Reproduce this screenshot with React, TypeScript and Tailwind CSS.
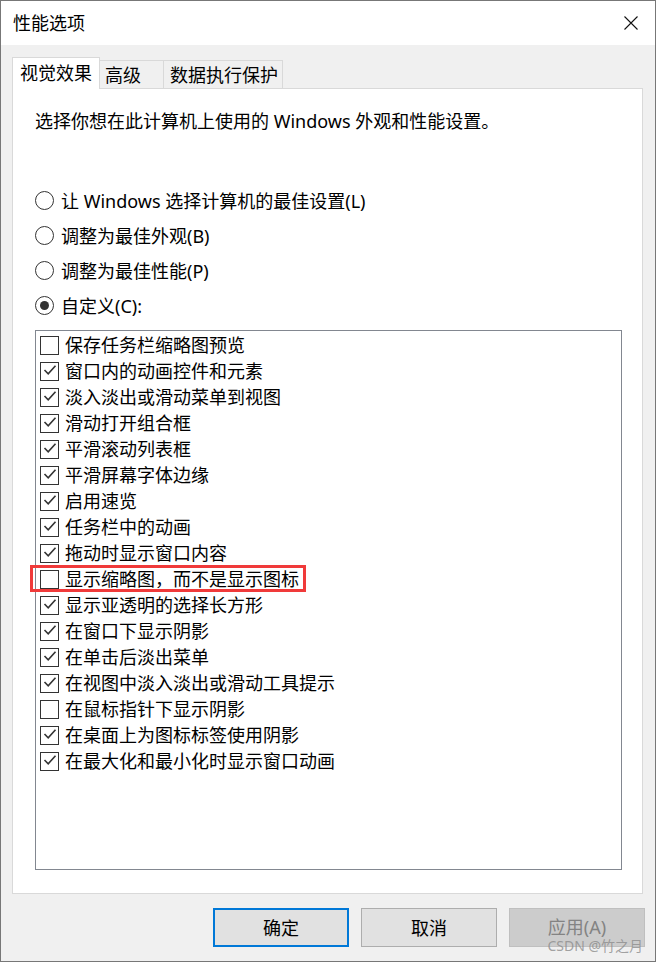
import { useState } from "react";

const options = [
  { key: "auto", label: "让 Windows 选择计算机的最佳设置(L)" },
  { key: "look", label: "调整为最佳外观(B)" },
  { key: "perf", label: "调整为最佳性能(P)" },
  { key: "custom", label: "自定义(C):" },
];

const effects = [
  { label: "保存任务栏缩略图预览", on: false },
  { label: "窗口内的动画控件和元素", on: true },
  { label: "淡入淡出或滑动菜单到视图", on: true },
  { label: "滑动打开组合框", on: true },
  { label: "平滑滚动列表框", on: true },
  { label: "平滑屏幕字体边缘", on: true },
  { label: "启用速览", on: true },
  { label: "任务栏中的动画", on: true },
  { label: "拖动时显示窗口内容", on: true },
  { label: "显示缩略图，而不是显示图标", on: false, marked: true },
  { label: "显示亚透明的选择长方形", on: true },
  { label: "在窗口下显示阴影", on: true },
  { label: "在单击后淡出菜单", on: true },
  { label: "在视图中淡入淡出或滑动工具提示", on: true },
  { label: "在鼠标指针下显示阴影", on: false },
  { label: "在桌面上为图标标签使用阴影", on: true },
  { label: "在最大化和最小化时显示窗口动画", on: true },
];

const Checkbox = ({ checked }: { checked: boolean }) => (
  <span className="w-[19px] h-[19px] shrink-0 border border-[#333] bg-white flex items-center justify-center">
    {checked && (
      <svg width="17" height="17" viewBox="0 0 17 17">
        <polyline points="3.5,7 7.2,10.8 14.5,2.8" fill="none" stroke="#333" strokeWidth="1.6" />
      </svg>
    )}
  </span>
);

const Radio = ({ selected }: { selected: boolean }) => (
  <span className="w-[19px] h-[19px] shrink-0 rounded-full border border-[#333] bg-white flex items-center justify-center">
    {selected && <span className="w-[9px] h-[9px] rounded-full bg-[#333]" />}
  </span>
);

export default function App() {
  const [choice, setChoice] = useState("custom");
  const [items, setItems] = useState(effects);

  const toggle = (i: number) =>
    setItems((prev) => prev.map((it, idx) => (idx === i ? { ...it, on: !it.on } : it)));

  return (
    <div className="relative w-[656px] h-[962px] border border-[#777] bg-[#f0f0f0] flex flex-col text-[18px] text-black font-['Noto_Sans','Noto_Sans_CJK_SC',sans-serif]">
      {/* title bar */}
      <div className="h-[44px] shrink-0 bg-white flex items-center justify-between pl-[12px] pr-[17px]">
        <span className="leading-[24px]">性能选项</span>
        <svg width="14" height="14" viewBox="0 0 14 14">
          <path d="M0.5 0.5 L13.5 13.5 M13.5 0.5 L0.5 13.5" stroke="#111" strokeWidth="1.1" />
        </svg>
      </div>

      <div className="flex-1 flex flex-col pl-[11px] pr-[12px] pt-[12px]">
        {/* tabs */}
        <div className="h-[31px] flex items-end">
          <div className="relative z-10 w-[88px] h-[32px] -mb-px bg-white border border-b-0 border-[#d9d9d9] flex items-center pl-[7px] leading-[24px] pb-[2px]">
            视觉效果
          </div>
          <div className="w-[65px] h-[28px] -ml-px border border-b-0 border-[#d9d9d9] flex items-center pl-[5px] leading-[24px]">
            高级
          </div>
          <div className="w-[120px] h-[28px] -ml-px border border-b-0 border-[#d9d9d9] flex items-center pl-[6px] leading-[24px]">
            数据执行保护
          </div>
        </div>

        {/* panel */}
        <div className="w-[631px] h-[806px] bg-white border border-[#d9d9d9] pl-[22px] pt-[20px]">
          <p className="leading-[24px]">选择你想在此计算机上使用的 Windows 外观和性能设置。</p>

          <div className="mt-[50px] flex flex-col">
            {options.map((o) => (
              <div
                key={o.key}
                onClick={() => setChoice(o.key)}
                className="h-[35px] flex items-center gap-[7px] cursor-default"
              >
                <Radio selected={choice === o.key} />
                <span className="leading-[24px]">{o.label}</span>
              </div>
            ))}
          </div>

          <div className="mt-[7px] w-[587px] h-[540px] border border-[#828790] pt-px">
            {items.map((it, i) => (
              <div
                key={it.label}
                onClick={() => toggle(i)}
                className="relative h-[26px] flex items-center gap-[6px] pl-[4px]"
              >
                <Checkbox checked={it.on} />
                <span className="leading-[24px] whitespace-nowrap">{it.label}</span>
                {it.marked && (
                  <span className="absolute left-[-6px] top-[-1px] w-[276px] h-[27px] border-[3px] border-[#f03a3a] pointer-events-none" />
                )}
              </div>
            ))}
          </div>
        </div>

        {/* buttons */}
        <div className="mt-[14px] flex justify-end gap-[12px] -mr-[2px]">
          <button className="w-[136px] h-[39px] bg-[#e1e1e1] border-2 border-[#0078d7] leading-[22px]">确定</button>
          <button className="w-[136px] h-[39px] bg-[#e1e1e1] border border-[#adadad] leading-[22px]">取消</button>
          <button className="w-[136px] h-[39px] bg-[#cccccc] border border-[#bfbfbf] text-[#838383] leading-[22px] pb-[2px]">
            应用(A)
          </button>
        </div>
      </div>

      {/* watermark */}
      <span className="absolute right-[12px] bottom-[8px] text-[14px] leading-[14px] text-[#8c8c8c]/80 pointer-events-none">
        CSDN @竹之月
      </span>
    </div>
  );
}
